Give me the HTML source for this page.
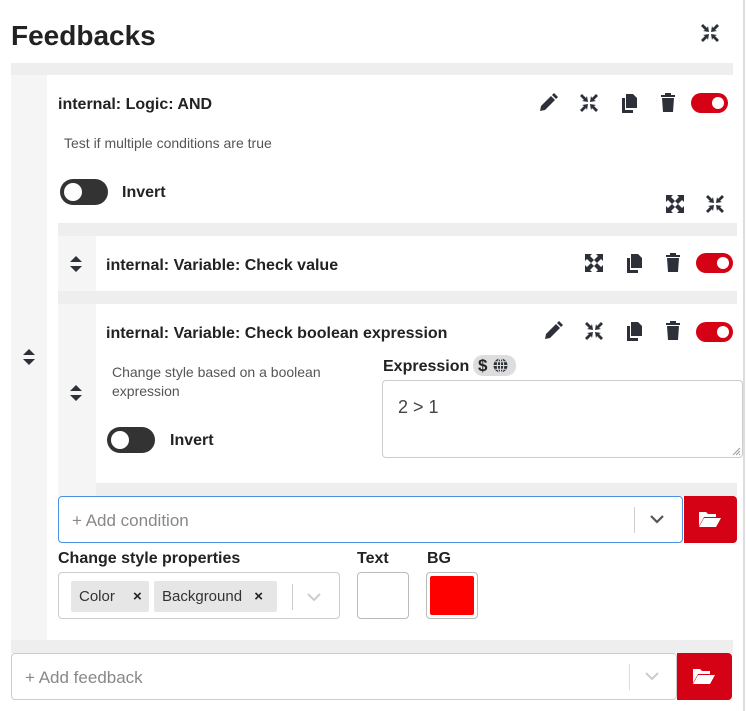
<!DOCTYPE html>
<html><head><meta charset="utf-8"><style>
*{box-sizing:border-box;margin:0;padding:0}
body{width:746px;height:711px;background:#fff;font-family:"Liberation Sans",sans-serif;color:#222;position:relative;overflow:hidden}
.a{position:absolute}
.b{font-weight:bold}
.ic{position:absolute;width:20px;height:20px}
.tg{position:absolute;width:37px;height:20px;border-radius:10px;background:#d50215}
.tg::after{content:"";position:absolute;right:4px;top:4px;width:12px;height:12px;border-radius:50%;background:#fff}
.tgo{position:absolute;width:48px;height:26px;border-radius:13px;background:#333}
.tgo::after{content:"";position:absolute;left:4px;top:4px;width:18px;height:18px;border-radius:50%;background:#fff}
.red{position:absolute;background:#d50215;border-radius:0 4px 4px 0}
</style></head><body>
<div class="a b" style="left:11px;top:20px;font-size:28px;color:#222">Feedbacks</div>
<svg class="ic" style="left:700px;top:23px" viewBox="0 0 20 20"><g fill="#2d3038"><path d="M1 3l2-2 4 4 1-2 1 6-6-1 2-1z"/><path d="M19 3l-2-2-4 4-1-2-1 6 6-1-2-1z"/><path d="M1 17l2 2 4-4 1 2 1-6-6 1 2 1z"/><path d="M19 17l-2 2-4-4-1 2-1-6 6 1-2 1z"/></g></svg>
<div class="a" style="left:743px;top:0;width:2px;height:711px;background:#ddd"></div>

<div class="a" style="left:11px;top:63px;width:722px;height:590px;background:#eee"></div>
<div class="a" style="left:11px;top:75px;width:36px;height:565px;background:#f5f5f5"></div>
<div class="a" style="left:47px;top:75px;width:686px;height:565px;background:#fff"></div>

<svg class="a" style="left:23px;top:349px" width="12" height="16" viewBox="0 0 12 16"><path d="M6 0L12 6H0z M6 16L0 10H12z" fill="#2d3038"/></svg>

<div class="a b" style="left:58px;top:96px;font-size:16px">internal: Logic: AND</div>
<svg class="ic" style="left:538px;top:93px" viewBox="0 0 20 20"><path d="M2 18l1-5L13 3l4 4L7 17z M14 2l2-2 4 4-2 2z" fill="#2d3038"/></svg>
<svg class="ic" style="left:579px;top:93px" viewBox="0 0 20 20"><g fill="#2d3038"><path d="M1 3l2-2 4 4 1-2 1 6-6-1 2-1z"/><path d="M19 3l-2-2-4 4-1-2-1 6 6-1-2-1z"/><path d="M1 17l2 2 4-4 1 2 1-6-6 1 2 1z"/><path d="M19 17l-2 2-4-4-1 2-1-6 6 1-2 1z"/></g></svg>
<svg class="ic" style="left:619px;top:93px" viewBox="0 0 20 20"><path d="M7 1h7l4 4v10H7z M3 5h3v12h8v3H3z" fill="#2d3038"/></svg>
<svg class="ic" style="left:658px;top:92px" viewBox="0 0 20 20"><path d="M3 3h14v2H3z M7 1h6v2H7z M4 6h12l-1 14H5z" fill="#2d3038"/></svg>
<div class="tg" style="left:691px;top:93px"></div>
<div class="a" style="left:64px;top:135px;font-size:14px;color:#555">Test if multiple conditions are true</div>
<div class="tgo" style="left:60px;top:179px"></div>
<div class="a b" style="left:122px;top:184px;font-size:16px">Invert</div>
<svg class="ic" style="left:665px;top:194px" viewBox="0 0 20 20"><g fill="#2d3038"><path d="M1 1h7l-2 2 4 4-3 3-4-4-2 2z"/><path d="M19 1v7l-2-2-4 4-3-3 4-4-2-2z"/><path d="M1 19v-7l2 2 4-4 3 3-4 4 2 2z"/><path d="M19 19h-7l2-2-4-4 3-3 4 4 2-2z"/></g></svg>
<svg class="ic" style="left:705px;top:194px" viewBox="0 0 20 20"><g fill="#2d3038"><path d="M1 3l2-2 4 4 1-2 1 6-6-1 2-1z"/><path d="M19 3l-2-2-4 4-1-2-1 6 6-1-2-1z"/><path d="M1 17l2 2 4-4 1 2 1-6-6 1 2 1z"/><path d="M19 17l-2 2-4-4-1 2-1-6 6 1-2 1z"/></g></svg>

<div class="a" style="left:58px;top:223px;width:679px;height:273px;background:#eee"></div>
<div class="a" style="left:58px;top:236px;width:38px;height:260px;background:#f5f5f5"></div>
<div class="a" style="left:96px;top:236px;width:641px;height:55px;background:#fff"></div>
<div class="a" style="left:58px;top:291px;width:679px;height:13px;background:#eee"></div>
<div class="a" style="left:96px;top:304px;width:641px;height:179px;background:#fff"></div>

<svg class="a" style="left:70px;top:256px" width="12" height="16" viewBox="0 0 12 16"><path d="M6 0L12 6H0z M6 16L0 10H12z" fill="#2d3038"/></svg>
<div class="a b" style="left:106px;top:257px;font-size:16px">internal: Variable: Check value</div>
<svg class="ic" style="left:584px;top:253px" viewBox="0 0 20 20"><g fill="#2d3038"><path d="M1 1h7l-2 2 4 4-3 3-4-4-2 2z"/><path d="M19 1v7l-2-2-4 4-3-3 4-4-2-2z"/><path d="M1 19v-7l2 2 4-4 3 3-4 4 2 2z"/><path d="M19 19h-7l2-2-4-4 3-3 4 4 2-2z"/></g></svg>
<svg class="ic" style="left:624px;top:253px" viewBox="0 0 20 20"><path d="M7 1h7l4 4v10H7z M3 5h3v12h8v3H3z" fill="#2d3038"/></svg>
<svg class="ic" style="left:663px;top:252px" viewBox="0 0 20 20"><path d="M3 3h14v2H3z M7 1h6v2H7z M4 6h12l-1 14H5z" fill="#2d3038"/></svg>
<div class="tg" style="left:696px;top:253px"></div>

<div class="a b" style="left:106px;top:325px;font-size:16px">internal: Variable: Check boolean expression</div>
<svg class="ic" style="left:543px;top:321px" viewBox="0 0 20 20"><path d="M2 18l1-5L13 3l4 4L7 17z M14 2l2-2 4 4-2 2z" fill="#2d3038"/></svg>
<svg class="ic" style="left:584px;top:321px" viewBox="0 0 20 20"><g fill="#2d3038"><path d="M1 3l2-2 4 4 1-2 1 6-6-1 2-1z"/><path d="M19 3l-2-2-4 4-1-2-1 6 6-1-2-1z"/><path d="M1 17l2 2 4-4 1 2 1-6-6 1 2 1z"/><path d="M19 17l-2 2-4-4-1 2-1-6 6 1-2 1z"/></g></svg>
<svg class="ic" style="left:624px;top:321px" viewBox="0 0 20 20"><path d="M7 1h7l4 4v10H7z M3 5h3v12h8v3H3z" fill="#2d3038"/></svg>
<svg class="ic" style="left:663px;top:320px" viewBox="0 0 20 20"><path d="M3 3h14v2H3z M7 1h6v2H7z M4 6h12l-1 14H5z" fill="#2d3038"/></svg>
<div class="tg" style="left:696px;top:322px"></div>
<svg class="a" style="left:70px;top:385px" width="12" height="16" viewBox="0 0 12 16"><path d="M6 0L12 6H0z M6 16L0 10H12z" fill="#2d3038"/></svg>
<div class="a" style="left:112px;top:363px;font-size:14px;color:#555;line-height:19px;width:240px">Change style based on a boolean expression</div>
<div class="tgo" style="left:107px;top:427px"></div>
<div class="a b" style="left:170px;top:432px;font-size:16px">Invert</div>
<div class="a b" style="left:383px;top:358px;font-size:16px">Expression</div>
<div class="a b" style="left:473px;top:355px;width:43px;height:21px;border-radius:10px;background:#ddd;font-size:17px;padding-left:5px;line-height:21px">$</div>
<svg class="a" style="left:493px;top:358px" width="15" height="15" viewBox="0 0 14 14"><circle cx="7" cy="7" r="6.5" fill="#2d3038"/><path d="M0.5 7h13 M7 0.5v13 M2 3.5h10 M2 10.5h10" stroke="#ddd" stroke-width="1"/><ellipse cx="7" cy="7" rx="3" ry="6.5" fill="none" stroke="#ddd" stroke-width="1"/></svg>
<div class="a" style="left:382px;top:380px;width:361px;height:78px;border:1px solid #ccc;border-radius:4px"></div>
<svg class="a" style="left:731px;top:446px" width="10" height="10" viewBox="0 0 10 10"><path d="M9 2L2 9M9 5L5 9M9 8L8 9" stroke="#999" stroke-width="1"/></svg>
<div class="a" style="left:398px;top:397px;font-size:18px;color:#444">2 &gt; 1</div>

<div class="a" style="left:58px;top:496px;width:625px;height:47px;border:1.5px solid #4a90e2;border-radius:4px;background:#fff"></div>
<div class="a" style="left:72px;top:511px;font-size:17px;color:#888">+ Add condition</div>
<div class="a" style="left:634px;top:507px;width:1px;height:26px;background:#ccc"></div>
<svg class="a" style="left:650px;top:514px" width="14" height="10" viewBox="0 0 14 10"><path d="M1 2l6 6 6-6" stroke="#555" stroke-width="2.2" fill="none"/></svg>
<div class="red" style="left:684px;top:496px;width:53px;height:47px"></div>
<svg class="a" style="left:698px;top:510px" width="24" height="18" viewBox="0 0 24 18"><path d="M1 2h7l2 2h8v3H6L1 16z M6 8h17l-5 9H1z" fill="#fff"/></svg>

<div class="a b" style="left:58px;top:550px;font-size:16px">Change style properties</div>
<div class="a b" style="left:357px;top:550px;font-size:16px">Text</div>
<div class="a b" style="left:427px;top:550px;font-size:16px">BG</div>
<div class="a" style="left:58px;top:572px;width:282px;height:47px;border:1px solid #ccc;border-radius:4px"></div>
<div class="a" style="left:71px;top:581px;width:78px;height:31px;background:#e6e6e6;border-radius:2px;font-size:15px;line-height:31px;padding-left:8px;color:#333">Color <span style="margin-left:14px;font-weight:bold;color:#222">×</span></div>
<div class="a" style="left:154px;top:581px;width:123px;height:31px;background:#e6e6e6;border-radius:2px;font-size:15px;line-height:31px;padding-left:8px;color:#333">Background <span style="margin-left:8px;font-weight:bold;color:#222">×</span></div>
<div class="a" style="left:292px;top:584px;width:1px;height:26px;background:#ccc"></div>
<svg class="a" style="left:307px;top:592px" width="14" height="10" viewBox="0 0 14 10"><path d="M1 2l6 6 6-6" stroke="#ccc" stroke-width="2" fill="none"/></svg>
<div class="a" style="left:357px;top:572px;width:52px;height:47px;border:1px solid #bbb;border-radius:4px;background:#fff"></div>
<div class="a" style="left:426px;top:572px;width:52px;height:47px;border:1px solid #bbb;border-radius:4px;background:#fff"></div>
<div class="a" style="left:430px;top:576px;width:44px;height:39px;background:#f00;border-radius:2px"></div>

<div class="a" style="left:11px;top:653px;width:666px;height:47px;border:1px solid #ccc;border-radius:4px;background:#fff"></div>
<div class="a" style="left:25px;top:668px;font-size:17px;color:#888">+ Add feedback</div>
<div class="a" style="left:629px;top:664px;width:1px;height:26px;background:#ddd"></div>
<svg class="a" style="left:645px;top:671px" width="14" height="10" viewBox="0 0 14 10"><path d="M1 2l6 6 6-6" stroke="#ccc" stroke-width="2" fill="none"/></svg>
<div class="red" style="left:677px;top:653px;width:55px;height:47px"></div>
<svg class="a" style="left:692px;top:667px" width="24" height="18" viewBox="0 0 24 18"><path d="M1 2h7l2 2h8v3H6L1 16z M6 8h17l-5 9H1z" fill="#fff"/></svg>
</body></html>
